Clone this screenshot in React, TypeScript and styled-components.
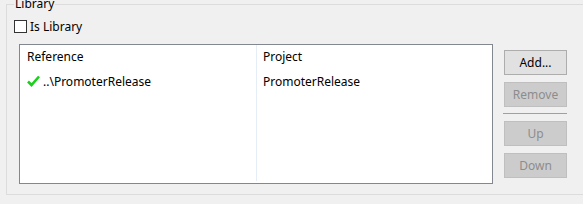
import React from 'react';
import styled, { createGlobalStyle } from 'styled-components';

const GlobalStyle = createGlobalStyle`
  html, body {
    margin: 0;
    padding: 0;
    background: #f0f0f0;
    overflow: hidden;
  }
  body {
    font-family: 'Noto Sans', 'Liberation Sans', sans-serif;
    font-size: 12px;
    color: #000;
  }
`;

const Group = styled.fieldset`
  margin: -4px -30px 0 6px;
  padding: 0 0 0 7px;
  height: 199px;
  border: 1px solid #dcdcdc;
  border-radius: 0;
  box-sizing: border-box;
`;

const Legend = styled.legend`
  margin-left: 0;
  padding: 0 1px;
  font-size: 12px;
  line-height: 16px;
`;

const CheckRow = styled.label`
  display: flex;
  align-items: center;
  gap: 3px;
  margin-top: 7px;
  height: 15px;
  line-height: 15px;
`;

const Box = styled.span`
  width: 13px;
  height: 13px;
  box-sizing: border-box;
  border: 1px solid #333;
  background: #fff;
`;

const Body = styled.div`
  display: flex;
  align-items: flex-start;
  margin-top: 10px;
  padding-left: 5px;
`;

const List = styled.div`
  display: flex;
  width: 474px;
  height: 140px;
  box-sizing: border-box;
  border: 1px solid #828790;
  background: #fff;
`;

const Column = styled.div<{ $width?: number; $divider?: boolean }>`
  display: flex;
  flex-direction: column;
  width: ${({ $width }) => ($width ? `${$width}px` : 'auto')};
  flex: ${({ $width }) => ($width ? 'none' : '1')};
  margin-bottom: 2px;
  border-right: ${({ $divider }) => ($divider ? '1px solid #e5edf6' : 'none')};
`;

const HeadCell = styled.div<{ $pad: number }>`
  height: 24px;
  line-height: 24px;
  padding-left: ${({ $pad }) => $pad}px;
  white-space: nowrap;
`;

const Cell = styled.div<{ $pad: number }>`
  display: flex;
  align-items: center;
  gap: 3px;
  height: 24px;
  padding-left: ${({ $pad }) => $pad}px;
  white-space: nowrap;
`;

const Buttons = styled.div`
  display: flex;
  flex-direction: column;
  gap: 7px;
  margin-left: 11px;
  margin-top: 6px;
  width: 63px;
`;

const Button = styled.button<{ $disabled?: boolean }>`
  width: 63px;
  height: 25px;
  padding: 0;
  box-sizing: border-box;
  font-family: inherit;
  font-size: 12px;
  color: ${({ $disabled }) => ($disabled ? '#8c8c8c' : '#000')};
  background: ${({ $disabled }) => ($disabled ? '#cccccc' : '#e1e1e1')};
  border: 1px solid ${({ $disabled }) => ($disabled ? '#bfbfbf' : '#adadad')};
  border-radius: 0;
`;

const Divider = styled.div`
  height: 1px;
  width: 64px;
  margin: -1px 0 0 -1px;
  background: #a0a0a0;
`;

const Check = () => (
  <svg width="13" height="12" viewBox="0 0 13 12">
    <path d="M1 6.5 L4.5 10 L12 1.5" fill="none" stroke="#1ccf1c" strokeWidth="2.6" strokeLinejoin="miter" />
  </svg>
);

export default function App() {
  return (
    <>
      <GlobalStyle />
      <Group>
        <Legend>Library</Legend>
        <CheckRow>
          <Box />
          Is Library
        </CheckRow>
        <Body>
          <List>
            <Column $width={236} $divider>
              <HeadCell $pad={7}>Reference</HeadCell>
              <Cell $pad={7}>
                <Check />
                ..\PromoterRelease
              </Cell>
            </Column>
            <Column>
              <HeadCell $pad={6}>Project</HeadCell>
              <Cell $pad={6}>PromoterRelease</Cell>
            </Column>
          </List>
          <Buttons>
            <Button>Add...</Button>
            <Button $disabled>Remove</Button>
            <Divider />
            <Button $disabled>Up</Button>
            <Button $disabled>Down</Button>
          </Buttons>
        </Body>
      </Group>
    </>
  );
}
